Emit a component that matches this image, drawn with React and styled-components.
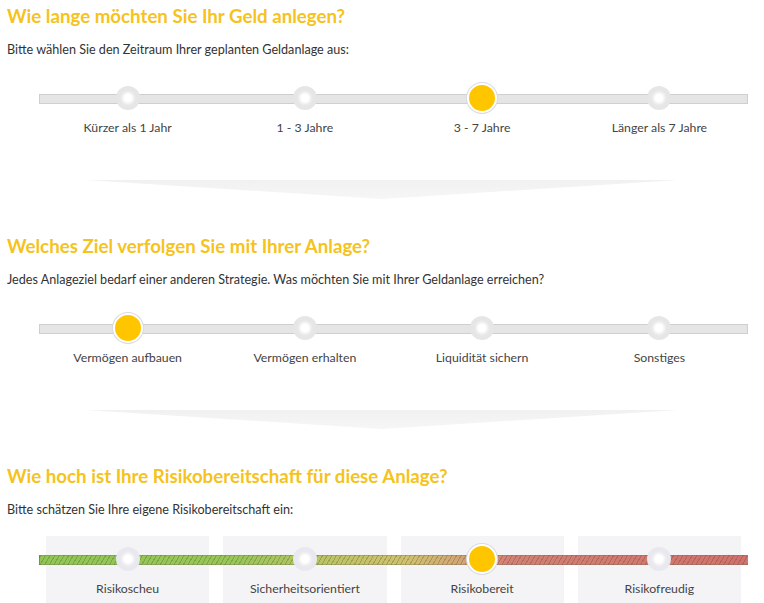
import React from "react";
import styled, { createGlobalStyle } from "styled-components";

const Global = createGlobalStyle`
  html, body { margin: 0; padding: 0; background: #fff; }
  body { font-family: Lato, "Open Sans", Arial, sans-serif; color: #333; }
`;

const Page = styled.div`
  width: 764px;
  padding: 0 0 0 7px;
  box-sizing: border-box;
`;

const Section = styled.section`
  display: flex;
  flex-direction: column;
`;

const Title = styled.h2`
  margin: 0;
  font-size: 18.7px;
  line-height: 32px;
  font-weight: 700;
  color: #f5c31c;
`;

const Lead = styled.p`
  margin: 8px 0 0;
  font-size: 12.6px;
  line-height: 20px;
  color: #333;
`;

const Slider = styled.div`
  position: relative;
  margin: ${(p) => (p.$boxed ? "16px" : "22px")} 0 0 32px;
  width: 709px;
`;

const Track = styled.div`
  position: absolute;
  left: 0;
  right: 0;
  top: ${(p) => (p.$boxed ? "19px" : "12px")};
  height: 8px;
  border: 1px solid ${(p) => (p.$risk ? "rgba(120,110,90,0.35)" : "#cfcfcf")};
  background: ${(p) =>
    p.$risk
      ? `repeating-linear-gradient(120deg, rgba(70,70,40,0.28) 0 1px, transparent 1px 4px),
         linear-gradient(to right, #8fc653 0%, #98c657 28%, #b9c463 40%, #cfc06d 52%, #d3a274 60%, #d48074 66%, #d2716b 100%)`
      : "#e5e5e5"};
  z-index: 1;
`;

const Steps = styled.div`
  display: grid;
  grid-template-columns: repeat(4, 1fr);
`;

const Step = styled.div`
  display: flex;
  flex-direction: column;
  align-items: center;
  margin: 0 ${(p) => (p.$boxed ? "7px" : "0")};
  padding-top: ${(p) => (p.$boxed ? "7px" : "0")};
  height: ${(p) => (p.$boxed ? "80px" : "auto")};
  background: ${(p) => (p.$boxed ? "#f4f4f6" : "transparent")};
`;

const Knob = styled.div`
  position: relative;
  z-index: 2;
  height: 32px;
  display: flex;
  align-items: center;
  justify-content: center;
`;

const Dot = styled.span`
  position: relative;
  width: 24px;
  height: 24px;
  border-radius: 50%;
  background: ${(p) => (p.$boxed ? "#e8e8ee" : "#e6e6e6")};
  &::after {
    content: "";
    position: absolute;
    left: 50%;
    top: 50%;
    width: 8px;
    height: 8px;
    margin: -4px 0 0 -4px;
    border-radius: 50%;
    background: #fff;
    box-shadow: 0 0 3px 2px rgba(255, 255, 255, 0.9);
  }
`;

const ActiveDot = styled.span`
  width: 26px;
  height: 26px;
  border-radius: 50%;
  background: #ffc600;
  border: 2px solid #fff;
  box-shadow: 0 0 0 1px #d9d9e0;
`;

const Label = styled.span`
  margin-top: 6px;
  font-size: 12.3px;
  line-height: 16px;
  color: #444;
`;

const Divider = styled.div`
  align-self: center;
  margin: 44px 0 31px -7px;
  width: 592px;
  height: 19px;
  background: linear-gradient(to bottom, #f1f1f1, #f6f6f6);
  clip-path: polygon(0 0, 100% 0, 50% 100%);
`;

const sections = [
  {
    title: "Wie lange möchten Sie Ihr Geld anlegen?",
    lead: "Bitte wählen Sie den Zeitraum Ihrer geplanten Geldanlage aus:",
    steps: ["Kürzer als 1 Jahr", "1 - 3 Jahre", "3 - 7 Jahre", "Länger als 7 Jahre"],
    active: 2,
  },
  {
    title: "Welches Ziel verfolgen Sie mit Ihrer Anlage?",
    lead: "Jedes Anlageziel bedarf einer anderen Strategie. Was möchten Sie mit Ihrer Geldanlage erreichen?",
    steps: ["Vermögen aufbauen", "Vermögen erhalten", "Liquidität sichern", "Sonstiges"],
    active: 0,
  },
  {
    title: "Wie hoch ist Ihre Risikobereitschaft für diese Anlage?",
    lead: "Bitte schätzen Sie Ihre eigene Risikobereitschaft ein:",
    steps: ["Risikoscheu", "Sicherheitsorientiert", "Risikobereit", "Risikofreudig"],
    active: 2,
    risk: true,
  },
];

export default function App() {
  return (
    <>
      <Global />
      <Page>
        {sections.map((s, i) => (
          <Section key={s.title}>
            <Title>{s.title}</Title>
            <Lead>{s.lead}</Lead>
            <Slider $boxed={s.risk}>
              <Track $boxed={s.risk} $risk={s.risk} />
              <Steps>
                {s.steps.map((label, j) => (
                  <Step key={label} $boxed={s.risk}>
                    <Knob>{j === s.active ? <ActiveDot /> : <Dot $boxed={s.risk} />}</Knob>
                    <Label>{label}</Label>
                  </Step>
                ))}
              </Steps>
            </Slider>
            {i < sections.length - 1 && <Divider />}
          </Section>
        ))}
      </Page>
    </>
  );
}
